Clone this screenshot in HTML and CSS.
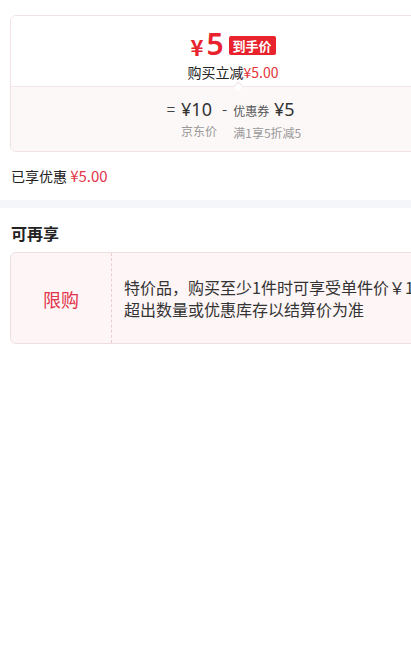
FILE: index.html
```html
<!DOCTYPE html>
<html lang="zh-CN">
<head>
<meta charset="utf-8">
<title>优惠明细</title>
<link rel="stylesheet" href="styles.css">
</head>
<body>
<div class="page">
  <section class="price-card">
    <div class="price-top">
      <div class="final">
        <span class="yen">¥</span><span class="num">5</span><span class="tag">到手价</span>
      </div>
      <div class="reduce">购买立减<span class="red">¥5.00</span></div>
    </div>
    <div class="price-bottom">
      <div class="formula">
        <div class="term">
          <span class="op op-eq">=</span>
          <div class="col">
            <span class="val">¥10</span>
            <span class="lbl">京东价</span>
          </div>
        </div>
        <div class="term">
          <span class="op">-</span>
          <div class="col">
            <span class="val"><span class="kind">优惠券</span> ¥5</span>
            <span class="lbl">满1享5折减5</span>
          </div>
        </div>
      </div>
    </div>
  </section>

  <div class="enjoyed">已享优惠 <span class="red">¥5.00</span></div>
</div>

<div class="band"></div>

<div class="page">
  <h2 class="section-title">可再享</h2>
  <section class="promo-card">
    <div class="promo-type">限购</div>
    <div class="promo-desc">特价品，购买至少1件时可享受单件价￥10，<br>超出数量或优惠库存以结算价为准</div>
  </section>
</div>
</body>
</html>
```

FILE: styles.css
```css
html, body {
  margin: 0;
  padding: 0;
  background: #ffffff;
  overflow: hidden;
}

body {
  font-family: "Noto Sans CJK SC", "Noto Sans", sans-serif;
  color: #333333;
  width: 411px;
  height: 666px;
}

.page {
  width: 446px;
  padding: 0 10px;
}

.red {
  color: #e3343c;
}

/* ---------- price card ---------- */
.price-card {
  margin-top: 15px;
  border: 1px solid #f2e2e5;
  border-radius: 6px;
  overflow: hidden;
  box-sizing: border-box;
  height: 137px;
  display: flex;
  flex-direction: column;
}

.price-top {
  position: relative;
  height: 71px;
  box-sizing: border-box;
  padding-top: 13px;
  display: flex;
  flex-direction: column;
  align-items: center;
  border-bottom: 1px solid #f4e6e8;
  background: #ffffff;
}

.price-top::after {
  content: "";
  position: absolute;
  left: 224px;
  bottom: -4px;
  width: 6px;
  height: 6px;
  background: #ffffff;
  border-left: 1px solid #f1e3e5;
  border-top: 1px solid #f1e3e5;
  transform: rotate(45deg);
}

.final {
  display: flex;
  align-items: center;
  height: 30px;
  color: #e8232e;
}

.final .yen {
  font-size: 22px;
  font-weight: 700;
  line-height: 1;
  margin-top: 4px;
  margin-right: 3px;
}

.final .num {
  font-family: "Noto Sans", "Noto Sans CJK SC", sans-serif;
  font-size: 30px;
  font-weight: 600;
  line-height: 1;
}

.final .tag {
  margin-left: 5px;
  margin-top: 3px;
  background: #e8232e;
  color: #ffffff;
  font-size: 13px;
  font-weight: 700;
  line-height: 19px;
  padding: 0 4px;
  border-radius: 2px;
}

.reduce {
  font-size: 14px;
  line-height: 20px;
  margin-top: 3px;
  color: #222222;
}

.price-bottom {
  flex: 1;
  background: #fdf8f8;
  display: flex;
  justify-content: center;
  padding-top: 10px;
}

.formula {
  display: flex;
  gap: 5px;
  margin-left: 2px;
}

.term {
  display: flex;
  align-items: flex-start;
}

.op {
  font-size: 15px;
  line-height: 24px;
  color: #444444;
  margin-right: 6px;
}

.op-eq {
  margin-right: 6px;
}

.col {
  display: flex;
  flex-direction: column;
}

.val {
  font-family: "Noto Sans", "Noto Sans CJK SC", sans-serif;
  font-size: 18px;
  font-weight: 400;
  line-height: 24px;
  color: #333333;
}

.val .kind {
  font-family: "Noto Sans CJK SC", sans-serif;
  font-size: 12px;
  font-weight: 400;
  color: #555555;
}

.lbl {
  font-size: 12px;
  line-height: 18px;
  margin-top: 1px;
  color: #999999;
}

.enjoyed {
  margin-top: 14px;
  font-size: 14px;
  line-height: 20px;
  color: #222222;
  padding-left: 1px;
}

.enjoyed .red {
  color: #e2344a;
  font-size: 15px;
}

.band {
  margin-top: 14px;
  height: 8px;
  background: #f5f6fa;
  width: 466px;
}

.section-title {
  margin: 14px 0 0 1px;
  font-size: 16px;
  font-weight: 700;
  line-height: 22px;
  color: #222222;
}

/* ---------- promo card ---------- */
.promo-card {
  margin-top: 8px;
  height: 92px;
  box-sizing: border-box;
  border: 1px solid #f0dfe2;
  border-radius: 6px;
  background: #fdf5f6;
  display: flex;
}

.promo-type {
  width: 100px;
  flex: none;
  display: flex;
  align-items: center;
  justify-content: center;
  border-right: 1px dashed #e8cdd2;
  font-size: 18px;
  color: #e2344a;
  padding-top: 2px;
}

.promo-desc {
  padding: 0 10px 0 12px;
  display: flex;
  align-items: center;
  font-size: 16px;
  line-height: 22px;
  color: #333333;
  white-space: nowrap;
}
```
